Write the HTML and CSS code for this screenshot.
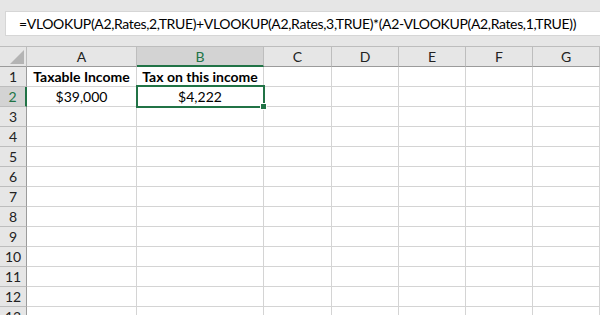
FILE: index.html
```html
<!DOCTYPE html>
<html lang="en">
<head>
    <meta charset="UTF-8">
    <title>VLOOKUP Tax Rates</title>
    <link rel="stylesheet" href="styles.css">
</head>
<body>

<div class="toolbar">
    <div class="formula-bar">=VLOOKUP(A2,Rates,2,TRUE)+VLOOKUP(A2,Rates,3,TRUE)*(A2-VLOOKUP(A2,Rates,1,TRUE))</div>
</div>

<div class="sheet">
    <div class="hdr corner"><span class="triangle"></span></div>
    <div class="hdr col">A</div>
    <div class="hdr col active-col">B</div>
    <div class="hdr col">C</div>
    <div class="hdr col">D</div>
    <div class="hdr col">E</div>
    <div class="hdr col">F</div>
    <div class="hdr col">G</div>

    <div class="hdr row">1</div>
    <div class="cell bold">Taxable Income</div>
    <div class="cell bold">Tax on this income</div>
    <div class="cell"></div><div class="cell"></div><div class="cell"></div><div class="cell"></div><div class="cell"></div>

    <div class="hdr row active-row">2</div>
    <div class="cell">$39,000</div>
    <div class="cell selected">$4,222<span class="handle"></span></div>
    <div class="cell"></div><div class="cell"></div><div class="cell"></div><div class="cell"></div><div class="cell"></div>
</div>

<script>
    // add the empty rows 3 to 13
    var sheet = document.querySelector('.sheet');
    for (var r = 3; r <= 13; r++) {
        var head = document.createElement('div');
        head.className = 'hdr row';
        head.textContent = r;
        sheet.appendChild(head);
        for (var c = 0; c < 7; c++) {
            var cell = document.createElement('div');
            cell.className = 'cell';
            sheet.appendChild(cell);
        }
    }
</script>

</body>
</html>
```

FILE: styles.css
```css
body {
    margin: 0;
    background-color: #e6e6e6;
    font-family: Lato, "Liberation Sans", sans-serif;
    color: #000;
    height: 315px;
    overflow: hidden;
}
.toolbar {
    padding: 11px 0 10px 5px;
}
.formula-bar {
    height: 25px;
    box-sizing: border-box;
    background: #fff;
    border: 1px solid #d6d6d6;
    border-right: none;
    padding-left: 13px;
    font-size: 14px;
    letter-spacing: -0.35px;
    line-height: 23px;
    white-space: nowrap;
    overflow: hidden;
}
.sheet {
    display: grid;
    grid-template-columns: 27px 110px 127px 68px 67px 67px 67px 67px;
    grid-auto-rows: 20px;
    grid-template-rows: 21px;
    background: #fff;
}
.hdr {
    background: #e6e6e6;
    box-sizing: border-box;
    border-right: 1px solid #bdbdbd;
    border-bottom: 1px solid #bdbdbd;
    font-size: 14px;
    color: #222;
    display: flex;
    align-items: center;
    justify-content: center;
}
.col {
    border-top: 1px solid #bdbdbd;
    border-bottom-color: #9b9b9b;
}
.corner {
    border-top: 1px solid #bdbdbd;
    border-bottom-color: #9b9b9b;
    position: relative;
}
.triangle {
    position: absolute;
    right: 2px;
    bottom: 2px;
    width: 0;
    height: 0;
    border-left: 14px solid transparent;
    border-bottom: 14px solid #b4b4b4;
}
.row {
    border-right-color: #9b9b9b;
}
.active-col {
    background: #d3d3d3;
    color: #217346;
    border-bottom: 2px solid #217346;
}
.active-row {
    background: #d3d3d3;
    color: #217346;
    border-right: 2px solid #217346;
}
.cell {
    box-sizing: border-box;
    border-right: 1px solid #d4d4d4;
    border-bottom: 1px solid #d4d4d4;
    font-size: 14px;
    text-align: center;
    line-height: 19px;
    white-space: nowrap;
}
.bold {
    font-weight: bold;
}
.selected {
    position: relative;
}
.selected::after {
    content: "";
    position: absolute;
    top: -2px;
    left: -1px;
    right: -2px;
    bottom: -2px;
    border: 2px solid #217346;
}
.handle {
    position: absolute;
    right: -4px;
    bottom: -4px;
    width: 5px;
    height: 5px;
    background: #217346;
    border: 1px solid #fff;
    z-index: 1;
}
```
